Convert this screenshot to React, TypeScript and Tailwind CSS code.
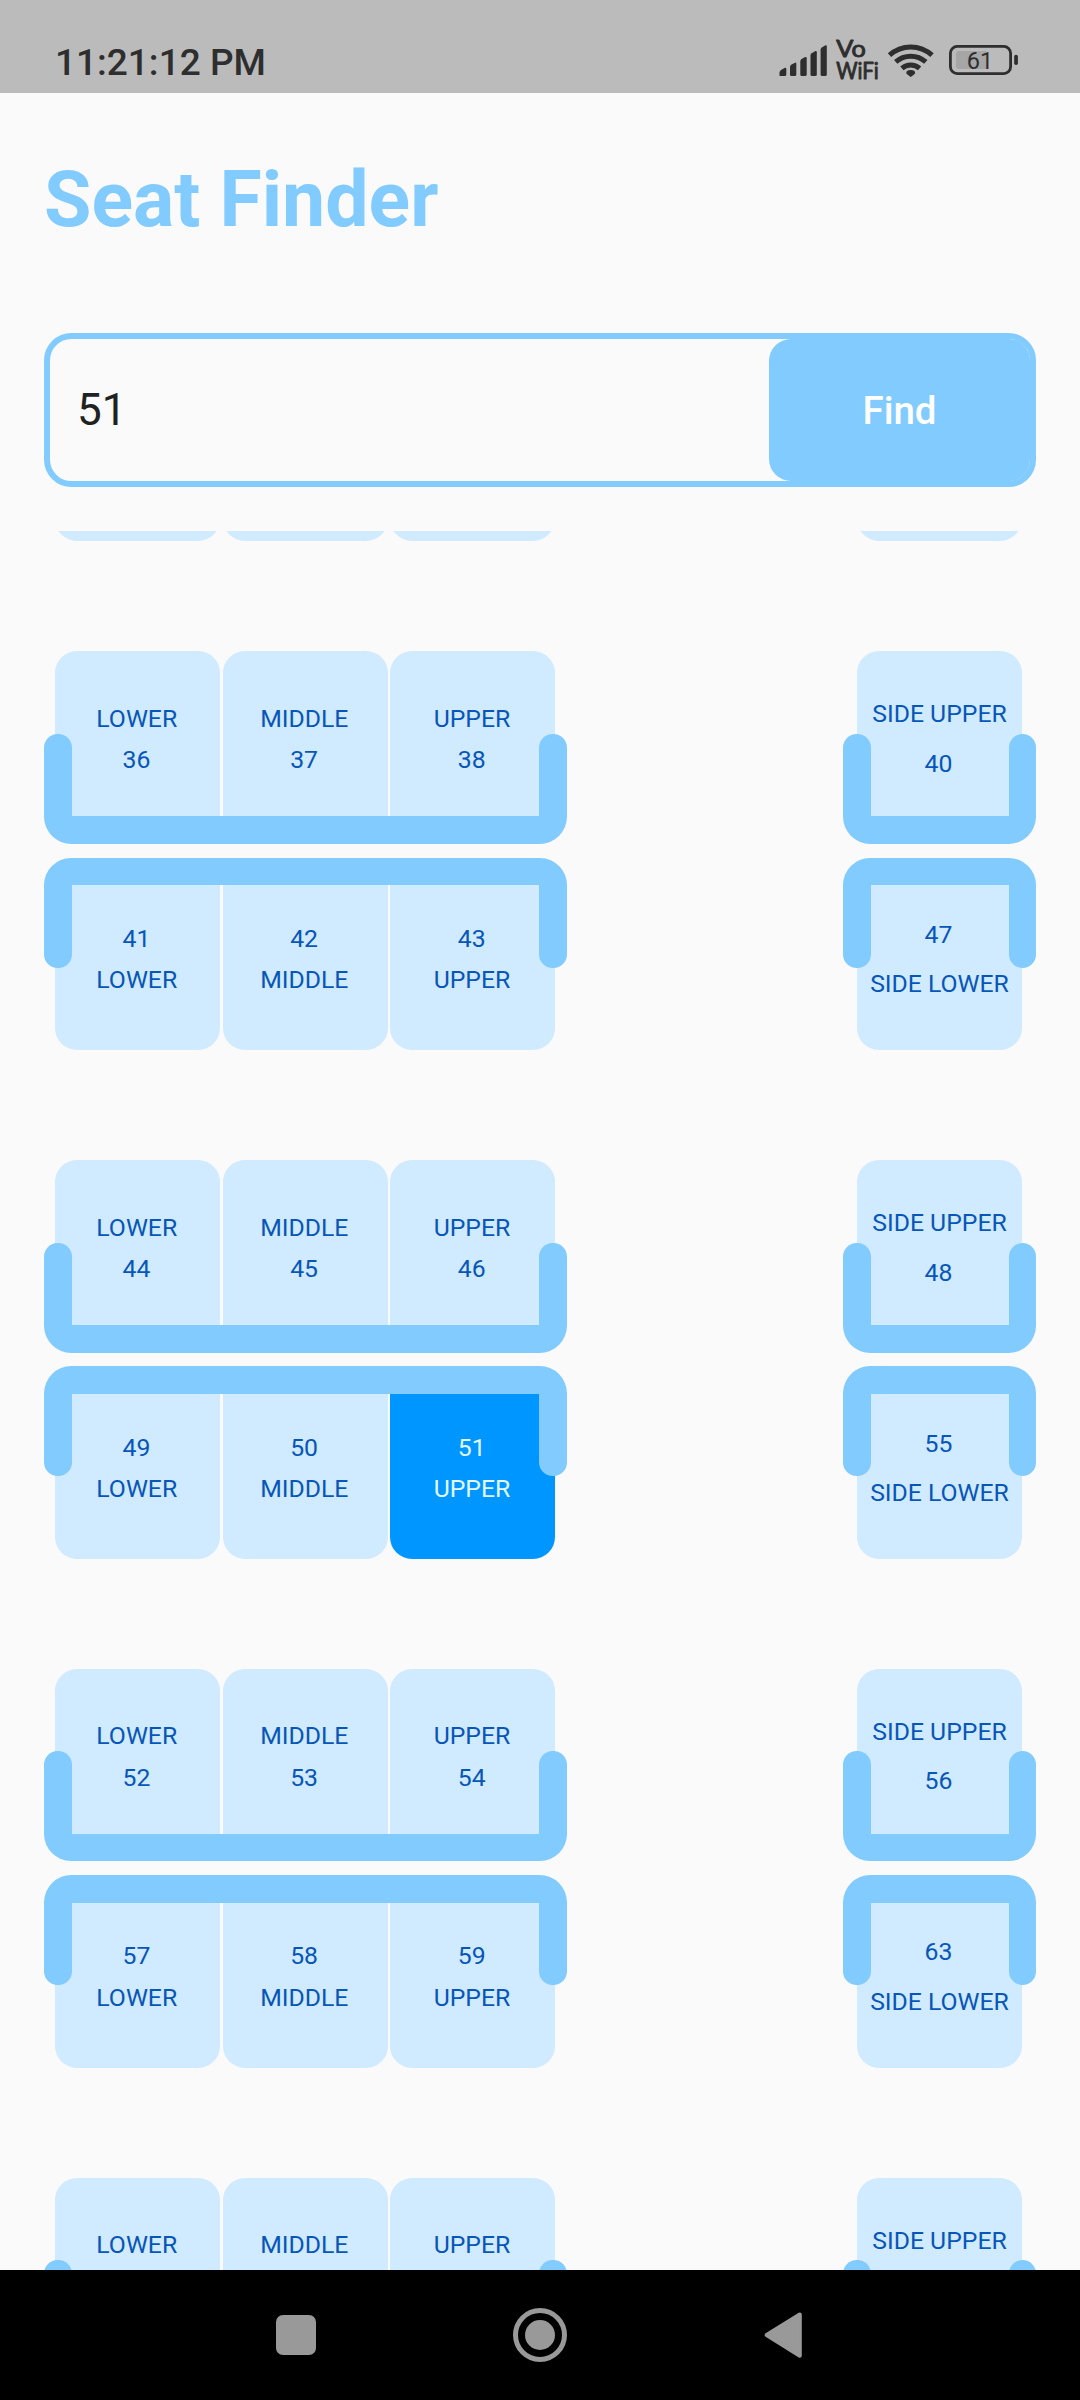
import React, { useState } from "react";

type Bay = {
  upper: [number, number, number];
  lower: [number, number, number];
  sideUpper: number;
  sideLower: number;
};

const LABELS = ["LOWER", "MIDDLE", "UPPER"];

const BAYS: Bay[] = [36, 44, 52, 60].map((n) => ({
  upper: [n, n + 1, n + 2],
  lower: [n + 5, n + 6, n + 7],
  sideUpper: n + 4,
  sideLower: n + 11,
}));

function StatusBar() {
  return (
    <header className="flex h-[93px] shrink-0 items-start justify-between bg-[#bbbbbb] pl-[55px] pr-[62px] text-[#2e2e2e]">
      <span className="pt-[41px] text-[37px] font-medium leading-[43px] whitespace-pre">11:21:12 PM</span>
      <svg className="mt-[33px]" width="242" height="54" viewBox="776 33 242 54" fill="#2e2e2e">
        <path d="M779.5 76V72.5Q779.5 71 781 70L785 67.8Q786.3 67.3 786.3 69V74.5Q786.3 76 784.8 76H781Q779.5 76 779.5 76Z" />
        <path d="M790 74.5V67Q790 65.6 791.2 64.7L795 62.7Q796.3 62.2 796.3 64V74.5Q796.3 76 794.8 76H791.5Q790 76 790 74.5Z" />
        <path d="M800.3 74.5V61.5Q800.3 59.8 801.5 59L805.3 57Q806.7 56.5 806.7 58.2V74.5Q806.7 76 805.2 76H801.8Q800.3 76 800.3 74.5Z" />
        <path d="M810.5 74.5V55.5Q810.5 54 811.7 53.2L815.5 51Q816.8 50.6 816.8 52.3V74.5Q816.8 76 815.3 76H812Q810.5 76 810.5 74.5Z" />
        <path d="M820.6 74.5V49.7Q820.6 48.2 821.8 47.4L825.5 45.3Q826.8 44.8 826.8 46.5V74.5Q826.8 76 825.3 76H822.1Q820.6 76 820.6 74.5Z" />
        <g fontFamily="Lato" fontWeight="400" fontSize="22.3" stroke="#2e2e2e" strokeWidth="0.9" strokeLinejoin="round">
          <text x="836.3" y="57.3" textLength="29.5" lengthAdjust="spacingAndGlyphs">Vo</text>
          <text x="836.3" y="79" textLength="42.5" lengthAdjust="spacingAndGlyphs">WiFi</text>
        </g>
        <g fill="none" stroke="#2e2e2e" strokeWidth="5">
          <path d="M889.5 55.2A31.5 31.5 0 0 1 932 55.2" />
          <path d="M895.7 61.9A22.5 22.5 0 0 1 925.8 61.9" />
          <path d="M901.9 68.4A13.5 13.5 0 0 1 919.6 68.4" />
        </g>
        <path d="M906.2 73.2Q906.2 70 910.7 70Q915.2 70 915.2 73.2Q914 75 910.7 77Q907.4 75 906.2 73.2Z" />
        <rect x="950.4" y="46.4" width="60.2" height="27.2" rx="6.8" fill="none" stroke="#2e2e2e" strokeWidth="2.8" />
        <path d="M959 51H986V69H959Q956 69 956 66V54Q956 51 959 51Z" fill="#a6a6a6" />
        <rect x="1014.2" y="54.7" width="3.7" height="10.3" rx="1.8" />
        <text x="966.8" y="69" fontFamily="Roboto" fontSize="23.5">61</text>
      </svg>
    </header>
  );
}

type SeatProps = { no: number; label: string; facing: "up" | "down"; side?: boolean; active: boolean };

function Seat({ no, label, facing, side, active }: SeatProps) {
  const up = facing === "up";
  const shape = up ? "rounded-t-[22px]" : "rounded-b-[22px]";
  const color = active ? "bg-[#0096ff] text-[#e2f8ff]" : "bg-[#d0eaff] text-[#0756b8]";
  const pad = up ? (side ? "pt-[38px]" : "pt-[46.5px]") : side ? "pt-[24.8px]" : "pt-[32.8px]";
  const leading = side ? "leading-[49.5px]" : "leading-[41.25px]";
  const num = <span className="pr-[2px]">{no}</span>;
  return (
    <div className={`flex h-[165px] w-[165px] flex-col items-center whitespace-nowrap text-[24.75px] ${shape} ${color} ${pad} ${leading}`}>
      {!up && num}
      <span className={side ? "" : "pr-[1.5px]"}>{label}</span>
      {up && num}
    </div>
  );
}

/* A berth frame: seats with a backrest bar and two armrests lying over them. */
function Berth({ facing, side, children }: { facing: "up" | "down"; side?: boolean; children: React.ReactNode }) {
  const up = facing === "up";
  const arm = up ? "bottom-[27.5px] rounded-t-[13.75px]" : "top-[27.5px] rounded-b-[13.75px]";
  return (
    <div className={`relative flex ${up ? "flex-col" : "flex-col-reverse"} ${side ? "w-[193px]" : "w-[522.5px]"}`}>
      <div className={`flex gap-[2.6px] ${side ? "px-[14px]" : "px-[11px]"}`}>{children}</div>
      <div className={`h-[27.5px] bg-[#82cbff] ${up ? "rounded-b-[27.5px]" : "rounded-t-[27.5px]"}`} />
      <div className={`absolute left-0 h-[82.5px] w-[27.5px] bg-[#82cbff] ${arm}`} />
      <div className={`absolute right-0 h-[82.5px] w-[27.5px] bg-[#82cbff] ${arm}`} />
    </div>
  );
}

function BayRow({ bay, found }: { bay: Bay; found: number }) {
  return (
    <div className="flex shrink-0 justify-between">
      <div className="flex flex-col gap-[13.75px]">
        <Berth facing="up">
          {bay.upper.map((n, i) => (
            <Seat key={n} no={n} label={LABELS[i]} facing="up" active={n === found} />
          ))}
        </Berth>
        <Berth facing="down">
          {bay.lower.map((n, i) => (
            <Seat key={n} no={n} label={LABELS[i]} facing="down" active={n === found} />
          ))}
        </Berth>
      </div>
      <div className="flex flex-col gap-[13.75px]">
        <Berth facing="up" side>
          <Seat no={bay.sideUpper} label="SIDE UPPER" facing="up" side active={bay.sideUpper === found} />
        </Berth>
        <Berth facing="down" side>
          <Seat no={bay.sideLower} label="SIDE LOWER" facing="down" side active={bay.sideLower === found} />
        </Berth>
      </div>
    </div>
  );
}

/* The bottom edge of the bay that has scrolled out above the list. */
function ScrolledBayEdge() {
  const edge = "h-[60px] w-[165px] rounded-b-[22px] bg-[#d0eaff]";
  return (
    <div className="flex h-[10.25px] shrink-0 items-end justify-between overflow-hidden pl-[11px] pr-[14px]">
      <div className="flex gap-[2.6px]">
        <div className={edge} />
        <div className={edge} />
        <div className={edge} />
      </div>
      <div className={edge} />
    </div>
  );
}

function NavBar() {
  return (
    <nav className="flex h-[130px] shrink-0 items-center justify-center gap-[188px] bg-black">
      <div className="flex w-[56px] justify-center">
        <div className="size-[40px] rounded-[7px] bg-[#999999]" />
      </div>
      <div className="flex size-[56px] items-center justify-center">
        <div className="flex size-[54px] items-center justify-center rounded-full border-[5px] border-[#999999]">
          <div className="size-[30px] rounded-full bg-[#999999]" />
        </div>
      </div>
      <svg width="56" height="56" viewBox="756 2307 56 56" fill="#999999" stroke="#999999" strokeWidth="4" strokeLinejoin="round">
        <path d="M766.6 2335L799.8 2314.5V2355.7Z" />
      </svg>
    </nav>
  );
}

export default function App() {
  const [query, setQuery] = useState("51");
  const [found, setFound] = useState(51);
  return (
    <div className="flex h-[2400px] w-[1080px] flex-col overflow-hidden bg-[#fafafa] font-['Roboto',sans-serif]">
      <StatusBar />
      <h1 className="px-[44px] pt-[62px] text-[77px] font-bold leading-[90px] text-[#82cbff]">Seat Finder</h1>
      <form
        className="mx-[44px] mt-[88px] flex h-[154px] shrink-0 rounded-[27.5px] border-[6px] border-[#82cbff]"
        onSubmit={(e) => {
          e.preventDefault();
          setFound(Number(query));
        }}
      >
        <input
          className="min-w-0 flex-1 pl-[27px] text-[44px] text-[#212121] outline-none"
          value={query}
          onChange={(e) => setQuery(e.target.value)}
        />
        <button className="w-[261px] rounded-l-[22px] rounded-r-[21px] bg-[#82cbff] pt-[1px] text-[38.5px] font-medium text-white">Find</button>
      </form>
      <main className="mt-[44px] flex min-h-0 flex-1 flex-col gap-[110px] overflow-hidden px-[44px]">
        <ScrolledBayEdge />
        {BAYS.map((bay) => (
          <BayRow key={bay.sideUpper} bay={bay} found={found} />
        ))}
      </main>
      <NavBar />
    </div>
  );
}
